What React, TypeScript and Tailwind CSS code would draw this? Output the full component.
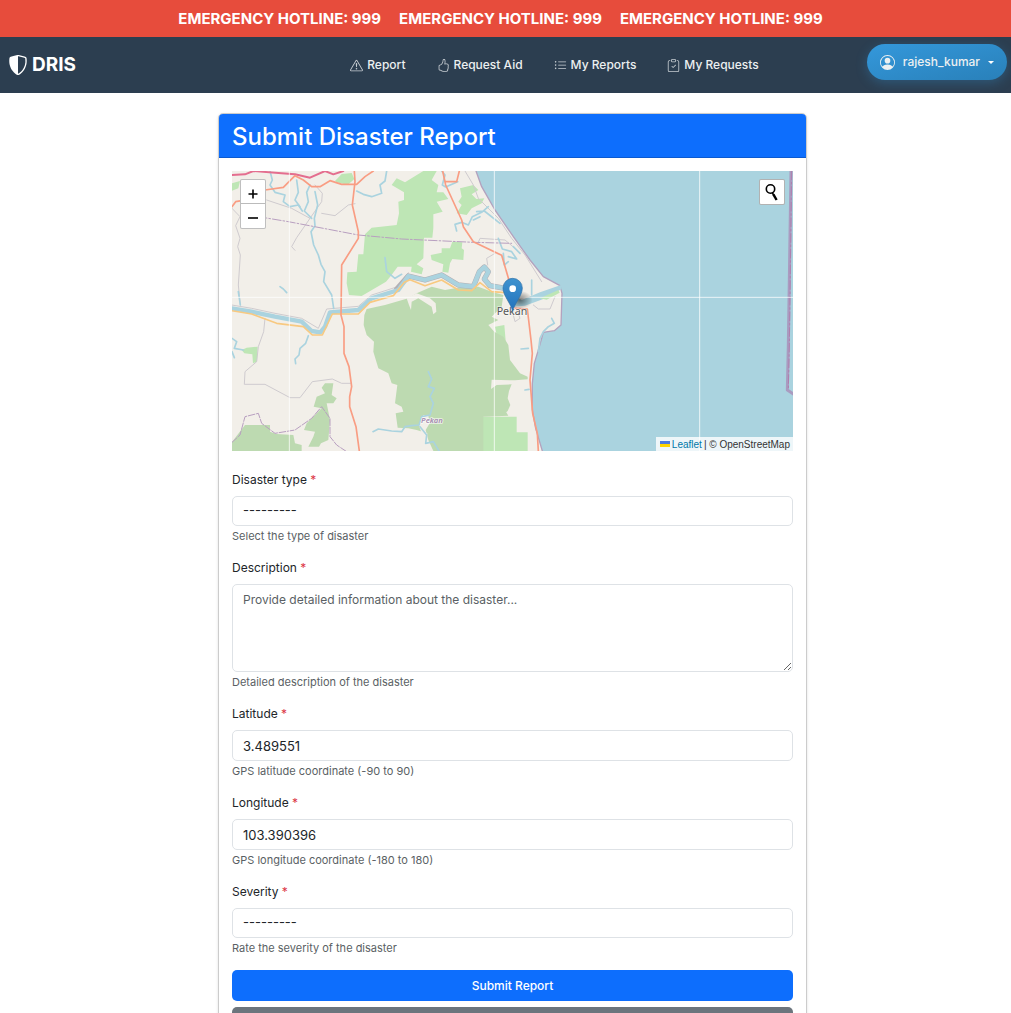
import React from "react";
import {
  BsShieldShaded,
  BsExclamationTriangle,
  BsHandThumbsUp,
  BsListUl,
  BsClipboardCheck,
  BsPersonCircle,
} from "react-icons/bs";

const hotlines = [1, 2, 3];

const links = [
  { label: "Report", Icon: BsExclamationTriangle },
  { label: "Request Aid", Icon: BsHandThumbsUp },
  { label: "My Reports", Icon: BsListUl },
  { label: "My Requests", Icon: BsClipboardCheck },
];

function HotlineBar() {
  return (
    <div className="flex h-[37px] items-center justify-center gap-[18px] overflow-hidden bg-[#e74c3c] pt-0.5 pr-2.5 text-[15px] font-bold whitespace-nowrap text-white">
      {hotlines.map((n) => (
        <span key={n}>EMERGENCY HOTLINE: 999</span>
      ))}
    </div>
  );
}

function NavBar() {
  return (
    <nav className="flex h-14 items-center justify-between bg-[#2c3e50] pr-1 pl-2 text-white">
      <a href="#home" className="flex flex-1 items-center gap-1 text-[19px] font-bold">
        <BsShieldShaded size={20} />
        DRIS
      </a>
      <ul className="flex items-center gap-[31px] pl-[94px] text-[12px] leading-5 font-medium text-[#ecf0f1]">
        {links.map(({ label, Icon }) => (
          <li key={label}>
            <a href="#nav" className="flex items-center gap-1">
              <Icon size={13} className="text-[#c8ced3]" />
              {label}
            </a>
          </li>
        ))}
      </ul>
      <div className="flex flex-1 justify-end pb-1.5">
        <button
          type="button"
          className="flex h-9 items-center gap-2 rounded-full bg-linear-to-br from-[#3498db] to-[#2980b9] px-[13px] text-[12px] font-medium text-[#ecf0f1] shadow-[0_3px_12px_rgba(52,152,219,0.3)]"
        >
          <BsPersonCircle size={15} />
          rajesh_kumar
          <span className="h-0 w-0 border-x-[3px] border-t-[3px] border-x-transparent border-t-white" />
        </button>
      </div>
    </nav>
  );
}

function MapDrawing() {
  return (
    <svg
      viewBox="51 198 1683 840"
      preserveAspectRatio="xMidYMid slice"
      className="block h-[280px] w-full"
      role="img"
      aria-label="Map around Pekan"
      fill="none"
      strokeLinejoin="round"
      strokeLinecap="round"
    >
      <defs>
        <linearGradient id="pin" x1="0" y1="0" x2="0" y2="1">
          <stop offset="0" stopColor="#3f93cf" />
          <stop offset="1" stopColor="#2272bd" />
        </linearGradient>
        <radialGradient id="shade">
          <stop offset="0" stopColor="#000" stopOpacity="0.5" />
          <stop offset="1" stopColor="#000" stopOpacity="0" />
        </radialGradient>
      </defs>
      <rect x="51" y="198" width="1683" height="840" fill="#f2efe9" />

      <g fill="#bee6b5">
        <path d="M530 240L545 220L570 232L625 198H665L650 225L670 240L665 262H685L700 282L665 290L683 320L655 328V370L652 398H627L625 460L605 478L625 490L620 508L588 500L590 485H548L528 512L513 530L440 573L402 570L395 535L397 502L425 500L430 448H445L450 388L470 368L545 360L552 325L550 290L567 285V262Z" />
        <path d="M735 250L775 240L790 255L770 268L784 282L808 280L800 295L770 310L755 330L725 325L740 300L730 290L740 275Z" />
        <path d="M647 450L680 443V430H705L712 410L742 412L740 430L747 435L745 465L712 462L705 475L700 503L682 500L685 478L650 465Z" />
        <path d="M51 235L75 228L70 250L51 257Z" />
        <path d="M360 228L380 207L410 204L418 222L398 240L365 232Z" />
        <path d="M80 735L95 728L128 725L126 770L114 775L112 748L88 745Z" />
        <path d="M760 935H905V982H938V1038H802V938Z" />
        <path d="M840 665L868 660L872 708L845 690Z" />
      </g>
      <g fill="#bddab1">
        <path d="M446 660L448 630L455 612L510 600L580 580L605 565L650 545L690 555L720 550L790 545L830 560L865 570L860 605L830 635L850 645L820 660L838 680L865 695L880 720L885 765L915 805L938 815V823L900 826L830 824L828 852L845 840L890 838L882 858L878 880L886 900L878 918L870 925L864 905L880 932L805 935V1038H655L635 1015L637 985L605 975L580 970L548 968L542 925L565 920L560 905L540 895L547 840L530 835L520 805L490 790L475 740L477 710L455 690Z" />
        <path d="M50 1012L90 960H165V980L185 987L235 990L240 1015L260 1020V1038H50Z" />
        <path d="M320 848L330 835L355 835L350 870L365 880L355 895L335 895L345 945L340 1005L318 1015L312 1025H280L295 995L300 980L267 975L275 955L320 910L296 905L305 875L330 865Z" />
      </g>
      <path fill="#f2efe9" d="M605 565L645 580L662 595L664 620L655 628L650 605L610 580L590 590L588 615L582 600L575 580Z" />
      <path fill="#f2efe9" d="M612 962L625 930L640 932L644 955L632 975L640 1005L655 1038H630L620 985Z" />

      <g stroke="#cfcbcf" strokeWidth="3">
        <path d="M51 310L75 335L62 362L75 400L68 425L76 450L70 540L76 600" />
        <path d="M150 640L146 680L130 725L125 770L90 800L88 838H150L225 878L255 878L292 830L352 822L380 835H408" />
        <path d="M155 285L230 310L285 340L245 398L230 425L240 436" />
        <path d="M285 340L320 290L322 265L300 240M320 325L360 332L400 300L420 296" />
        <path d="M750 198L775 240L790 280L850 340L890 400L930 450L980 530" />
        <path d="M50 600L110 610L180 625L260 640L310 670L335 612L430 604L470 570L545 546L580 503" />
        <path d="M790 412L795 400L870 405L900 430M818 480L815 460L840 445" />
        <path d="M955 600L970 612L1005 612L1020 575M900 600L915 640L900 650L895 630" />
      </g>

      <path
        fill="#aad3df"
        d="M783 198L800 245L840 315L895 395L945 465L985 515L1035 542L1041 565L1038 660L1018 677L985 682L973 725L958 775L952 835V915L962 970L982 1038H1734V198Z"
      />
      <path
        stroke="#b3a2be"
        strokeWidth="4"
        d="M783 198L800 245L840 315L895 395L945 465L985 515L1035 542L1041 565L1038 660L1018 677L985 682L973 725L958 775L952 835V915L962 970L982 1038"
      />
      <path stroke="#a99bc0" strokeWidth="9" d="M1728 198L1720 720L1717 855L1735 867" />
      <path stroke="#b07fae" strokeWidth="3" strokeDasharray="26 8 5 8" d="M1730 198L1723 720L1720 852" />

      <g stroke="#aad3df" strokeWidth="5">
        <path d="M165 198L172 225L165 240L180 262L210 270L205 290L225 305L250 300L262 318" />
        <path d="M245 225L250 262L240 285L255 305M285 240L275 262L280 290L268 318L290 340" />
        <path d="M300 260L308 300L298 340L300 362L288 380L296 420L310 450L318 478L330 500L326 530L350 570L356 610" />
        <path d="M515 198L510 228L495 240L500 265L470 275L445 268L425 258" />
        <path d="M510 458L515 500L540 520L560 508" />
        <path d="M680 198L690 210L682 240L692 246L728 230M725 378L720 358L740 352L760 360L772 335L800 322L820 305M775 345L795 335M785 320L808 318L855 355" />
        <path d="M850 400L862 432L890 440L905 462L880 455M895 425L915 445" />
        <path d="M195 545L205 552L215 563M70 560L76 600" />
        <path d="M280 692L272 715L255 730L252 750L240 762L242 776" />
        <path d="M51 700L65 710L58 730L85 735M51 740L58 758" />
        <path d="M640 800L650 822L640 845L658 850L645 875L655 895L645 930L620 935L612 960L590 962L570 965L560 980L530 978L490 972L474 980M615 965L635 990L632 1015L655 1010L672 1038" />
        <path d="M950 525V570M918 732L940 730M930 855L942 853M1010 640L1018 655L1000 665L985 680L975 700L970 740" />
        <path d="M865 445L868 480L880 470" />
      </g>
      <path stroke="#b3b0b5" strokeWidth="16" d="M545 553L580 513L630 525L680 510L730 540L775 545L793 500L808 486L820 500L808 522L825 542L870 550" />
      <path
        stroke="#aad3df"
        strokeWidth="13"
        d="M50 610L110 620L180 635L260 650L290 678L316 682L330 665L345 622L430 615L470 580L550 555L580 513L630 525L680 510L730 540L775 545L793 500L808 486L820 500L808 522L825 542L870 550L895 580"
      />
      <path fill="#aad3df" d="M895 570L920 585L975 562L1038 540L1040 552L985 582L930 602L895 605Z" />
      <path fill="#bee6b5" d="M975 580L1030 555L1034 563L995 584Z" />

      <path
        stroke="#f8c981"
        strokeWidth="5"
        d="M50 617L110 627L185 655L265 665L292 690H322L352 627H430L465 592L535 572L568 532L585 524L630 542L680 525L730 555L770 557L795 533L830 560L870 563L882 590"
      />
      <g stroke="#b89fc0" strokeWidth="3">
        <path strokeDasharray="26 6 5 6" d="M130 335L220 350L430 390L560 402L775 412L890 415" />
        <path strokeDasharray="20 5" d="M51 1012L75 990L90 935L130 925L140 955L180 985L240 975L290 940L320 905L345 940L345 995L365 1020L392 1038" />
      </g>
      <path stroke="#e46e8f" strokeWidth="6" d="M51 210L90 208L115 198L200 205L240 208L285 218L330 198L355 208L385 198" />
      <g stroke="#f99d83" strokeWidth="5">
        <path d="M418 198L420 230L412 300L430 380V400L380 480L378 630L387 665V745L402 785L410 845L404 875V905L423 965L433 1038" />
        <path d="M150 255L205 247L240 212L265 225L290 245H315L345 227L380 238H425L450 215L475 198" />
        <path d="M51 305L62 290L85 286" />
        <path d="M683 198L692 240L740 345L745 365L775 410L860 451L880 519L895 609L937 612L948 705L952 745L945 825L953 925L967 985L970 1038M692 230H725L733 198" />
      </g>

      <g stroke="#fff" strokeWidth="3" strokeOpacity="0.75">
        <path d="M223 198V1038M838 198V1038M1454 198V1038M51 577H1734" />
      </g>

      <ellipse cx="915" cy="585" rx="38" ry="28" fill="url(#shade)" />
      <text
        x="891"
        y="629"
        textAnchor="middle"
        fill="#555"
        stroke="#fff"
        strokeOpacity="0.6"
        strokeWidth="4"
        paintOrder="stroke"
        className="font-['Noto_Sans',sans-serif] text-[32px]"
      >
        Pekan
      </text>
      <text
        x="651"
        y="953"
        textAnchor="middle"
        fill="#a68bb0"
        stroke="#fff"
        strokeOpacity="0.7"
        strokeWidth="5"
        paintOrder="stroke"
        className="font-['Noto_Sans',sans-serif] text-[23px] font-semibold italic"
      >
        Pekan
      </text>
      <path
        d="M893 619C888 595 864 572 864 549A29 29 0 0 1 922 549C922 572 898 595 893 619Z"
        fill="url(#pin)"
        stroke="#2e6fa8"
        strokeWidth="2"
      />
      <circle cx="893" cy="551" r="10" fill="#fff" />
    </svg>
  );
}

function DisasterMap() {
  return (
    <div className="relative overflow-hidden">
      <MapDrawing />
      <div className="absolute top-2 left-2 flex w-[26px] flex-col divide-y divide-[#bbb] rounded-xs border border-black/25 bg-white text-black">
        <button type="button" aria-label="Zoom in" className="flex h-6 items-center justify-center pt-1">
          <svg width="10" height="10" viewBox="0 0 10 10" stroke="currentColor" strokeWidth="1.6">
            <path d="M5 0.5V9.5M0.5 5H9.5" />
          </svg>
        </button>
        <button type="button" aria-label="Zoom out" className="flex h-6 items-center justify-center pt-1">
          <svg width="10" height="10" viewBox="0 0 10 10" stroke="currentColor" strokeWidth="1.6">
            <path d="M0 5H10" />
          </svg>
        </button>
      </div>
      <button
        type="button"
        aria-label="Search location"
        className="absolute top-2 right-2 flex size-[26px] items-center justify-center rounded-xs border border-black/30 bg-white text-black"
      >
        <svg width="14" height="18" viewBox="0 0 14 18" fill="none" stroke="currentColor">
          <circle cx="5.5" cy="6" r="4.2" strokeWidth="1.6" />
          <path d="M7.2 9.5L8.6 12" strokeWidth="1.6" />
          <path d="M8.4 11.4L11.6 17" strokeWidth="2.4" />
        </svg>
      </button>
      <div className="absolute right-0 bottom-0 flex h-3.5 items-center bg-white/80 pr-[3px] pl-1 font-['Liberation_Sans',sans-serif] text-[10px] text-[#333]">
        <svg width="10" height="6" viewBox="0 0 10 6" className="mr-0.5" aria-hidden="true">
          <path fill="#4c7be1" d="M0 0h10v3H0z" />
          <path fill="#ffd500" d="M0 3h10v3H0z" />
        </svg>
        <a href="#leaflet" className="text-[#0078a8]">
          Leaflet
        </a>
        <span className="ml-0.5">| © OpenStreetMap</span>
      </div>
    </div>
  );
}

const selectControl =
  "block h-[30px] w-full appearance-none rounded-[5px] border border-[#dee2e6] bg-white px-2.5 text-[13px] text-[#212529]";
const inputControl =
  "block h-[31px] w-full rounded-[5px] border border-[#dee2e6] bg-white px-2.5 text-[13px] text-[#212529]";

function Field({
  id,
  label,
  help,
  children,
}: {
  id: string;
  label: string;
  help: string;
  children: React.ReactNode;
}) {
  return (
    <div className="mb-[13px]">
      <label htmlFor={id} className="mb-1.5 block text-[12px] leading-5">
        {label} <span className="text-[#dc3545]">*</span>
      </label>
      {children}
      <p className="mt-0.5 text-[11px] leading-[17px] text-[#5a5f64]">{help}</p>
    </div>
  );
}

export default function App() {
  return (
    <div className="min-h-screen bg-white font-['Inter',sans-serif] text-[#212529]">
      <HotlineBar />
      <NavBar />
      <main className="pt-5 pl-3.5">
        <section className="mx-auto w-full max-w-[589px] rounded-[5px] border border-black/20 shadow-[0_1px_3px_rgba(0,0,0,0.12)]">
          <h1 className="flex h-11 items-center rounded-t-[4px] border-b border-[#0b5ad0] bg-[#0d6efd] px-[13px] pt-0.5 text-[24px] font-medium text-white">
            Submit Disaster Report
          </h1>
          <div className="p-[13px]">
            <DisasterMap />
            <form className="mt-[19px]">
              <Field id="type" label="Disaster type" help="Select the type of disaster">
                <select id="type" className={selectControl}>
                  <option>---------</option>
                </select>
              </Field>
              <Field id="description" label="Description" help="Detailed description of the disaster">
                <textarea
                  id="description"
                  placeholder="Provide detailed information about the disaster..."
                  className="block h-[88px] w-full resize rounded-[5px] border border-[#dee2e6] px-2.5 py-[5px] text-[12px] leading-5 placeholder:text-[#5a5f64]"
                />
              </Field>
              <Field id="latitude" label="Latitude" help="GPS latitude coordinate (-90 to 90)">
                <input id="latitude" defaultValue="3.489551" className={inputControl} />
              </Field>
              <Field id="longitude" label="Longitude" help="GPS longitude coordinate (-180 to 180)">
                <input id="longitude" defaultValue="103.390396" className={inputControl} />
              </Field>
              <Field id="severity" label="Severity" help="Rate the severity of the disaster">
                <select id="severity" className={selectControl}>
                  <option>---------</option>
                </select>
              </Field>
              <div className="flex flex-col gap-1.5">
                <button
                  type="submit"
                  className="h-[31px] rounded-[5px] bg-[#0d6efd] text-[12px] font-medium text-white"
                >
                  Submit Report
                </button>
                <button type="button" aria-label="Cancel" className="h-[31px] rounded-[5px] bg-[#6c757d]" />
              </div>
            </form>
          </div>
        </section>
      </main>
    </div>
  );
}
